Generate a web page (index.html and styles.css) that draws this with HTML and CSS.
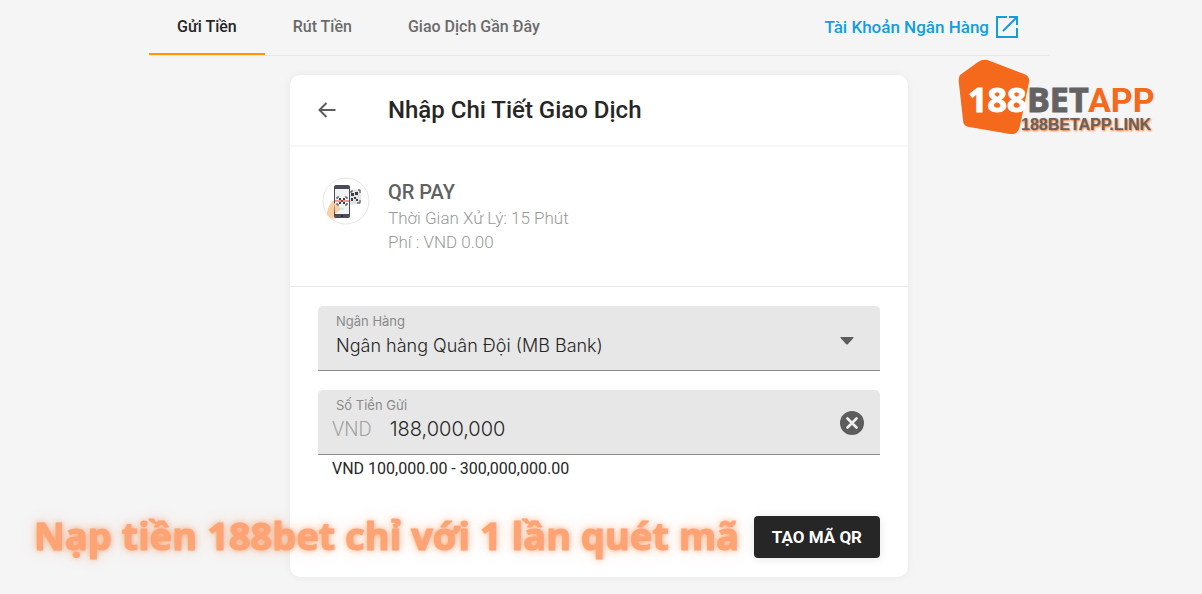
FILE: index.html
```
<!DOCTYPE html>
<html lang="vi">

<head>
    <meta charset="UTF-8">
    <meta name="viewport" content="width=device-width, initial-scale=1">
    <title>Nhập Chi Tiết Giao Dịch</title>
    <link rel="stylesheet" href="styles.css">
</head>

<body>
    <div class="page">
        <nav class="tabs">
            <a href="#" class="tab on">Gửi Tiền</a>
            <a href="#" class="tab">Rút Tiền</a>
            <a href="#" class="tab">Giao Dịch Gần Đây</a>
            <a href="#" class="account">Tài Khoản Ngân Hàng
                <svg width="22" height="22" viewBox="0 0 22 22" fill="none" stroke="currentColor" stroke-width="2">
                    <path d="M11 1H1v20h20V12M13 1h8v8M20.500 1.500L7 15" />
                </svg>
            </a>
        </nav>

        <main class="card">
            <header class="card-head">
                <button type="button" class="back" aria-label="Quay lại">
                    <svg width="18" height="16" viewBox="0 0 18 16" fill="none" stroke="currentColor" stroke-width="2">
                        <path d="M17.500 8H2M8.500 1L1.500 8l7 7" />
                    </svg>
                </button>
                <h1 class="title">Nhập Chi Tiết Giao Dịch</h1>
            </header>

            <section class="method">
                <svg class="method-icon" width="48" height="48" viewBox="0 0 48 48">
                    <circle cx="24" cy="24" r="23" fill="#fff" stroke="#e6e6e6" />
                    <path d="M27 13l12-1v15l-12 1z" fill="#e3e4e6" />
                    <path d="M29 16v-2h2M36 13h2v3M38 23v3h-3" fill="none" stroke="#3d3d42" />
                    <path d="M29 16h3v3h-3zM33 15h3v3h-3zM29 21h2v3h-2zM32 20h2v2h-2zM34 22h2v2h-2z" fill="#3d3d42" />
                    <path d="M5 38c0-6 2-10 7-15l3 3 5 3c1 2-2 3-3 5l-3 8c-3 0-6-1-9-4z" fill="#fbcfa2" />
                    <rect x="12" y="8" width="16" height="33" rx="2" fill="#4a4c59" />
                    <path d="M13 12h14v25H13z" fill="#f1f3f4" />
                    <path d="M12 26l4 3c3 1 3 3 1 5l-4 3z" fill="#fbcfa2" />
                    <path d="M15 22v-2h2M23 20h2v2M25 26v2h-2M17 28h-2v-2" fill="none" stroke="#3d3d42" />
                    <path d="M17 21h2v2h-2zM21 21h2v2h-2zM17 25h2v2h-2zM21 25h2v2h-2zM19 23h2v2h-2z" fill="#3d3d42" />
                    <path d="M13 24h14" stroke="#e8453c" />
                    <path d="M17 32h5" stroke="#b9e3df" />
                    <circle cx="20" cy="39" r="1" fill="#24252d" />
                </svg>
                <div class="method-text">
                    <h2 class="method-name">QR PAY</h2>
                    <p>Thời Gian Xử Lý: 15 Phút</p>
                    <p>Phí : VND 0.00</p>
                </div>
            </section>

            <form class="form">
                <div class="field">
                    <label for="bank">Ngân Hàng</label>
                    <select id="bank" class="control">
                        <option>Ngân hàng Quân Đội (MB Bank)</option>
                    </select>
                    <svg class="caret" width="14" height="8" viewBox="0 0 14 8">
                        <path d="M1 0h12q1 0 .4.900L8 7q-1 1-2 0L.6.900Q0 0 1 0z" fill="#5c5c5c" />
                    </svg>
                </div>

                <div class="field">
                    <label for="amount">Số Tiền Gửi</label>
                    <div class="amount">
                        <span class="currency">VND</span>
                        <input id="amount" class="control" type="text" value="188,000,000">
                    </div>
                    <button type="button" class="clear" aria-label="Xóa">
                        <svg width="24" height="24" viewBox="0 0 24 24">
                            <circle cx="12" cy="12" r="12" fill="#5c5c5c" />
                            <path d="M7.500 7.500l9 9M16.500 7.500l-9 9" stroke="#f0f0f0" stroke-width="2.600" stroke-linecap="round" />
                        </svg>
                    </button>
                </div>
                <p class="hint">VND 100,000.00 - 300,000,000.00</p>

                <button type="submit" class="submit">TẠO MÃ QR</button>
            </form>
        </main>
    </div>

    <svg class="logo" width="200" height="80" viewBox="0 0 200 80" role="img" aria-label="188BET APP">
        <path d="M4 17L22 4q6-4 12-1l34 13q6 2 5 8l-9 44q-2 9-10 8L13 69q-6-1-6-7L3 26q-1-6 1-9z" fill="#f4691b" />
        <text class="logo-188" x="12" y="54">188</text>
        <text class="logo-bet" x="71" y="54">BET</text>
        <text class="logo-app" x="132" y="54">APP</text>
        <text class="logo-link" x="65" y="72">188BETAPP.LINK</text>
    </svg>

    <p class="banner">Nạp tiền 188bet chỉ với 1 lần quét mã</p>
</body>

</html>
```
FILE: styles.css
```
* {
    box-sizing: border-box;
    margin: 0;
    padding: 0;
}

body {
    position: relative;
    background: #f5f5f5;
    color: #262626;
    font-family: Roboto, "Liberation Sans", sans-serif;
    font-size: 17px;
}

a {
    text-decoration: none;
}

button {
    border: 0;
    background: none;
    cursor: pointer;
}

svg {
    display: block;
}

.page {
    padding: 0 4px 17px 0;
}

.tabs {
    display: flex;
    max-width: 900px;
    height: 56px;
    margin: 0 auto 19px;
    border-bottom: 1px solid #e8e8e8;
}

.tab {
    padding: 16px 28px 0;
    border-bottom: 2px solid transparent;
    color: #6b6b6b;
    font-size: 16px;
    font-weight: 500;
    line-height: 22px;
}

.tabs .on {
    border-color: #ff9800;
    color: #262626;
}

.account {
    display: flex;
    gap: 7px;
    margin-left: auto;
    padding: 16px 31px 0 0;
    color: #119fdc;
    font-size: 17px;
    font-weight: 500;
    line-height: 22px;
}

.card {
    max-width: 618px;
    margin: 0 auto;
    border-radius: 10px;
    background: #fff;
    box-shadow: 0 0 8px rgba(0, 0, 0, .06);
}

.card-head {
    display: flex;
    align-items: center;
    height: 72px;
    padding: 0 28px;
    border-bottom: 2px solid #f7f7f7;
}

.back {
    width: 70px;
    color: #5c5c5c;
}

.title {
    font-size: 24px;
    font-weight: 500;
    line-height: 32px;
}

.method {
    display: flex;
    gap: 18px;
    padding: 30px 32px 32px;
    border-bottom: 1px solid #e8e8e8;
    color: #999;
    font-weight: 300;
    line-height: 24px;
}

.method-name {
    margin: 3px 0 2px;
    color: #616161;
    font-size: 20px;
    font-weight: 500;
    line-height: 24px;
}

.form {
    display: flex;
    flex-direction: column;
    padding: 19px 28px;
}

.field {
    position: relative;
    height: 65px;
    padding: 5px 18px 0;
    border-bottom: 1px solid #8a8a8a;
    border-radius: 5px 5px 0 0;
    background: #e7e7e7;
}

.field + .field {
    margin-top: 19px;
}

.field label {
    display: block;
    color: #8a8a8a;
    font-family: Inter, sans-serif;
    font-size: 13px;
    line-height: 20px;
}

.control {
    width: 100%;
    height: 28px;
    border: 0;
    outline: 0;
    background: none;
    color: #262626;
    font-family: Inter, sans-serif;
    font-size: 18px;
    font-weight: 300;
    appearance: none;
}

.caret {
    position: absolute;
    top: 31px;
    right: 26px;
    pointer-events: none;
}

.amount {
    display: flex;
    align-items: center;
    gap: 18px;
    margin: 0 32px 0 -4px;
}

.amount .control {
    font-size: 20px;
}

.currency {
    color: #a0a0a0;
    font-size: 20px;
    font-weight: 300;
}

.clear {
    position: absolute;
    top: 21px;
    right: 16px;
}

.hint {
    padding: 4px 14px 0;
    font-size: 16px;
    line-height: 20px;
}

.submit {
    align-self: flex-end;
    height: 42px;
    margin-top: 37px;
    padding: 0 18px;
    border-radius: 4px;
    background: #262626;
    box-shadow: 0 1px 8px rgba(0, 0, 0, .1);
    color: #fff;
    font-family: inherit;
    font-size: 17px;
    font-weight: 700;
}

.logo {
    position: absolute;
    top: 58px;
    right: 46px;
}

.logo-188,
.logo-bet {
    font-family: "Open Sans", sans-serif;
    font-size: 34px;
    font-weight: 700;
}

.logo-188 {
    fill: #fff;
    stroke: #fff;
}

.logo-bet {
    fill: #656264;
    stroke: #656264;
}

.logo-app {
    fill: #f4691b;
    font-size: 34px;
    font-weight: 700;
}

.logo-link {
    fill: #656264;
    font-family: "Liberation Sans", sans-serif;
    font-size: 16px;
    font-weight: 700;
    text-shadow: 1px 1px 2px #f4691b;
}

.banner {
    position: absolute;
    bottom: 33px;
    left: 34px;
    color: #fda374;
    font-family: "Open Sans", sans-serif;
    font-size: 38px;
    font-weight: 700;
    line-height: 52px;
    text-shadow: 0 0 6px rgba(244, 105, 27, .6), 0 0 18px rgba(244, 105, 27, .2);
    -webkit-text-stroke: 1px #fda374;
    pointer-events: none;
}
```
